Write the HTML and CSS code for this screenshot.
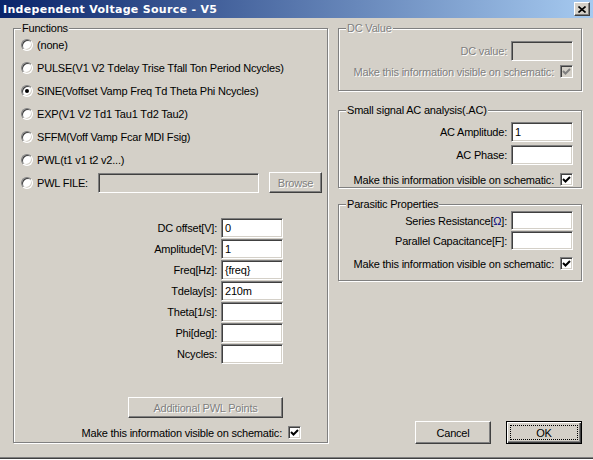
FILE: index.html
```html
<!DOCTYPE html>
<html>
<head>
<meta charset="utf-8">
<link rel="stylesheet" href="styles.css">
</head>
<body>
<div class="window">
  <div class="titlebar">
    <span class="title">Independent Voltage Source - V5</span>
    <span class="close"><svg width="8" height="7" viewBox="0 0 8 7"><path d="M0.5 0.5 L7.5 6.5 M7.5 0.5 L0.5 6.5" stroke="#000" stroke-width="1.6" fill="none"/></svg></span>
  </div>
  <div class="main">
    <div class="group functions">
      <span class="legend">Functions</span>
      <div class="radios">
        <div class="radio-row"><span class="radio"></span><span>(none)</span></div>
        <div class="radio-row"><span class="radio"></span><span>PULSE(V1 V2 Tdelay Trise Tfall Ton Period Ncycles)</span></div>
        <div class="radio-row"><span class="radio checked"></span><span>SINE(Voffset Vamp Freq Td Theta Phi Ncycles)</span></div>
        <div class="radio-row"><span class="radio"></span><span>EXP(V1 V2 Td1 Tau1 Td2 Tau2)</span></div>
        <div class="radio-row"><span class="radio"></span><span>SFFM(Voff Vamp Fcar MDI Fsig)</span></div>
        <div class="radio-row"><span class="radio"></span><span>PWL(t1 v1 t2 v2...)</span></div>
        <div class="radio-row"><span class="radio"></span><span class="file-label">PWL FILE:</span><span class="field disabled file-field"></span><span class="btn disabled browse">Browse</span></div>
      </div>
      <div class="params">
        <span class="plabel">DC offset[V]:</span><span class="field">0</span>
        <span class="plabel">Amplitude[V]:</span><span class="field">1</span>
        <span class="plabel">Freq[Hz]:</span><span class="field">{freq}</span>
        <span class="plabel">Tdelay[s]:</span><span class="field">210m</span>
        <span class="plabel">Theta[1/s]:</span><span class="field"></span>
        <span class="plabel">Phi[deg]:</span><span class="field"></span>
        <span class="plabel">Ncycles:</span><span class="field"></span>
      </div>
      <span class="btn disabled pwl-points">Additional PWL Points</span>
      <div class="check-row left-check"><span>Make this information visible on schematic:</span><span class="check"><svg width="9" height="9" viewBox="0 0 9 9"><path d="M1 4 L3.5 6.5 L8 2" stroke="#000" stroke-width="2" fill="none"/></svg></span></div>
    </div>
    <div class="right">
      <div class="group dc disabled-group">
        <span class="legend">DC Value</span>
        <div class="field-row"><span>DC value:</span><span class="field disabled"></span></div>
        <div class="check-row"><span>Make this information visible on schematic:</span><span class="check disabled"><svg width="9" height="9" viewBox="0 0 9 9"><path d="M1 4 L3.5 6.5 L8 2" stroke="#808080" stroke-width="2" fill="none"/></svg></span></div>
      </div>
      <div class="group ac">
        <span class="legend">Small signal AC analysis(.AC)</span>
        <div class="field-row"><span>AC Amplitude:</span><span class="field">1</span></div>
        <div class="field-row second"><span>AC Phase:</span><span class="field"></span></div>
        <div class="check-row"><span>Make this information visible on schematic:</span><span class="check"><svg width="9" height="9" viewBox="0 0 9 9"><path d="M1 4 L3.5 6.5 L8 2" stroke="#000" stroke-width="2" fill="none"/></svg></span></div>
      </div>
      <div class="group parasitic">
        <span class="legend">Parasitic Properties</span>
        <div class="field-row"><span>Series Resistance[<span class="omega">Ω</span>]:</span><span class="field short"></span></div>
        <div class="field-row second"><span>Parallel Capacitance[F]:</span><span class="field short"></span></div>
        <div class="check-row"><span>Make this information visible on schematic:</span><span class="check"><svg width="9" height="9" viewBox="0 0 9 9"><path d="M1 4 L3.5 6.5 L8 2" stroke="#000" stroke-width="2" fill="none"/></svg></span></div>
      </div>
      <div class="buttons">
        <span class="btn dialog">Cancel</span>
        <span class="btn dialog default">OK</span>
      </div>
    </div>
  </div>
</div>
</body>
</html>
```
FILE: styles.css
```css
* { box-sizing: border-box; }
body {
  margin: 0;
  background: #fff;
  font: 11px "Liberation Sans", Arial, sans-serif;
  letter-spacing: -0.2px;
  color: #000;
}
.window {
  width: 593px;
  height: 459px;
  background: #D4D0C8;
  border-bottom: 1px solid #404040;
  box-shadow: inset 0 -1px 0 #808080;
  overflow: hidden;
}
.titlebar {
  height: 18px;
  background: linear-gradient(to right, #0A246A, #A6CAF0);
  display: flex;
  align-items: center;
  padding: 0 3px 0 3px;
}
.title {
  color: #fff;
  font-family: "DejaVu Sans", "Liberation Sans", sans-serif;
  font-weight: bold;
  font-size: 11px;
  letter-spacing: 0.3px;
}
.close {
  margin-left: auto;
  width: 16px;
  height: 14px;
  background: #D4D0C8;
  border: 1px solid;
  border-color: #fff #404040 #404040 #fff;
  box-shadow: inset -1px -1px 0 #808080;
  display: flex;
  align-items: center;
  justify-content: center;
}
.main {
  display: grid;
  grid-template-columns: 315px 244px;
  column-gap: 10px;
  padding: 10px 0 0 13px;
  align-items: start;
}
.group {
  position: relative;
  border: 1px solid #808080;
  box-shadow: 1px 1px 0 #fff, inset 1px 1px 0 #fff;
}
.legend {
  position: absolute;
  top: -7px;
  left: 7px;
  padding: 0 1px;
  background: #D4D0C8;
  line-height: 13px;
  white-space: nowrap;
}
.functions {
  height: 415px;
  padding: 4px 0 0 7px;
}
.radio-row {
  height: 23px;
  display: flex;
  align-items: center;
  gap: 4px;
  white-space: nowrap;
}
.radio {
  position: relative;
  width: 12px;
  height: 12px;
  flex: none;
  border-radius: 50%;
  background: #fff;
  border: 1px solid;
  border-color: #808080 #fff #fff #808080;
  box-shadow: inset 1px 1px 0 #404040, inset -1px -1px 0 #D4D0C8;
}
.radio.checked::after {
  content: "";
  position: absolute;
  left: 3px;
  top: 3px;
  width: 4px;
  height: 4px;
  border-radius: 50%;
  background: #000;
}
.file-label { width: 57px; }
.field {
  display: block;
  width: 62px;
  height: 20px;
  background: #fff;
  border: 1px solid;
  border-color: #808080 #fff #fff #808080;
  box-shadow: inset 1px 1px 0 #404040, inset -1px -1px 0 #D4D0C8;
  padding: 0 3px;
  line-height: 18px;
  white-space: nowrap;
}
.field.disabled { background: #D4D0C8; }
.field.short { height: 19px; line-height: 17px; }
.file-field { width: 161px; margin-right: 6px; }
.btn {
  display: flex;
  align-items: center;
  justify-content: center;
  background: #D4D0C8;
  border: 1px solid;
  border-color: #fff #404040 #404040 #fff;
  box-shadow: inset -1px -1px 0 #808080;
  white-space: nowrap;
}
.btn.disabled {
  color: #808080;
  text-shadow: 1px 1px 0 #fff;
}
.browse { width: 53px; height: 21px; }
.params {
  margin-top: 24px;
  display: grid;
  grid-template-columns: 196px 62px;
  column-gap: 4px;
  row-gap: 1px;
  align-items: center;
}
.plabel { text-align: right; white-space: nowrap; }
.pwl-points {
  margin: 33px 0 0 107px;
  width: 155px;
  height: 21px;
}
.check-row {
  display: flex;
  justify-content: flex-end;
  align-items: center;
  gap: 6px;
  white-space: nowrap;
}
.left-check {
  width: 280px;
  margin-top: 8px;
}
.check {
  width: 13px;
  height: 13px;
  flex: none;
  background: #fff;
  border: 1px solid;
  border-color: #808080 #fff #fff #808080;
  box-shadow: inset 1px 1px 0 #404040, inset -1px -1px 0 #D4D0C8;
  display: flex;
  align-items: center;
  justify-content: center;
}
.check.disabled { background: #D4D0C8; }
.right {
  display: flex;
  flex-direction: column;
}
.field-row {
  display: flex;
  justify-content: flex-end;
  align-items: center;
  gap: 4px;
  white-space: nowrap;
}
.right .group { padding-right: 8px; }
.disabled-group {
  color: #808080;
  text-shadow: 1px 1px 0 #fff;
}
.dc { height: 63px; padding-top: 12px; }
.dc .check-row { margin-top: 4px; }
.ac { height: 78px; margin-top: 19px; padding-top: 11px; }
.ac .second { margin-top: 3px; }
.ac .check-row { margin-top: 8px; }
.parasitic { height: 77px; margin-top: 16px; padding-top: 6px; }
.parasitic .second { margin-top: 1px; }
.parasitic .check-row { margin-top: 7px; }
.omega { color: #000080; }
.buttons {
  margin-top: 140px;
  display: flex;
  justify-content: flex-end;
  gap: 15px;
}
.dialog { width: 76px; height: 23px; }
.default {
  position: relative;
  border: 1px solid #000;
  box-shadow: inset 1px 1px 0 #fff, inset -1px -1px 0 #404040, inset -2px -2px 0 #808080;
}
.default::after {
  content: "";
  position: absolute;
  left: 3px;
  top: 3px;
  right: 3px;
  bottom: 3px;
  border: 1px dotted #000;
}
```
